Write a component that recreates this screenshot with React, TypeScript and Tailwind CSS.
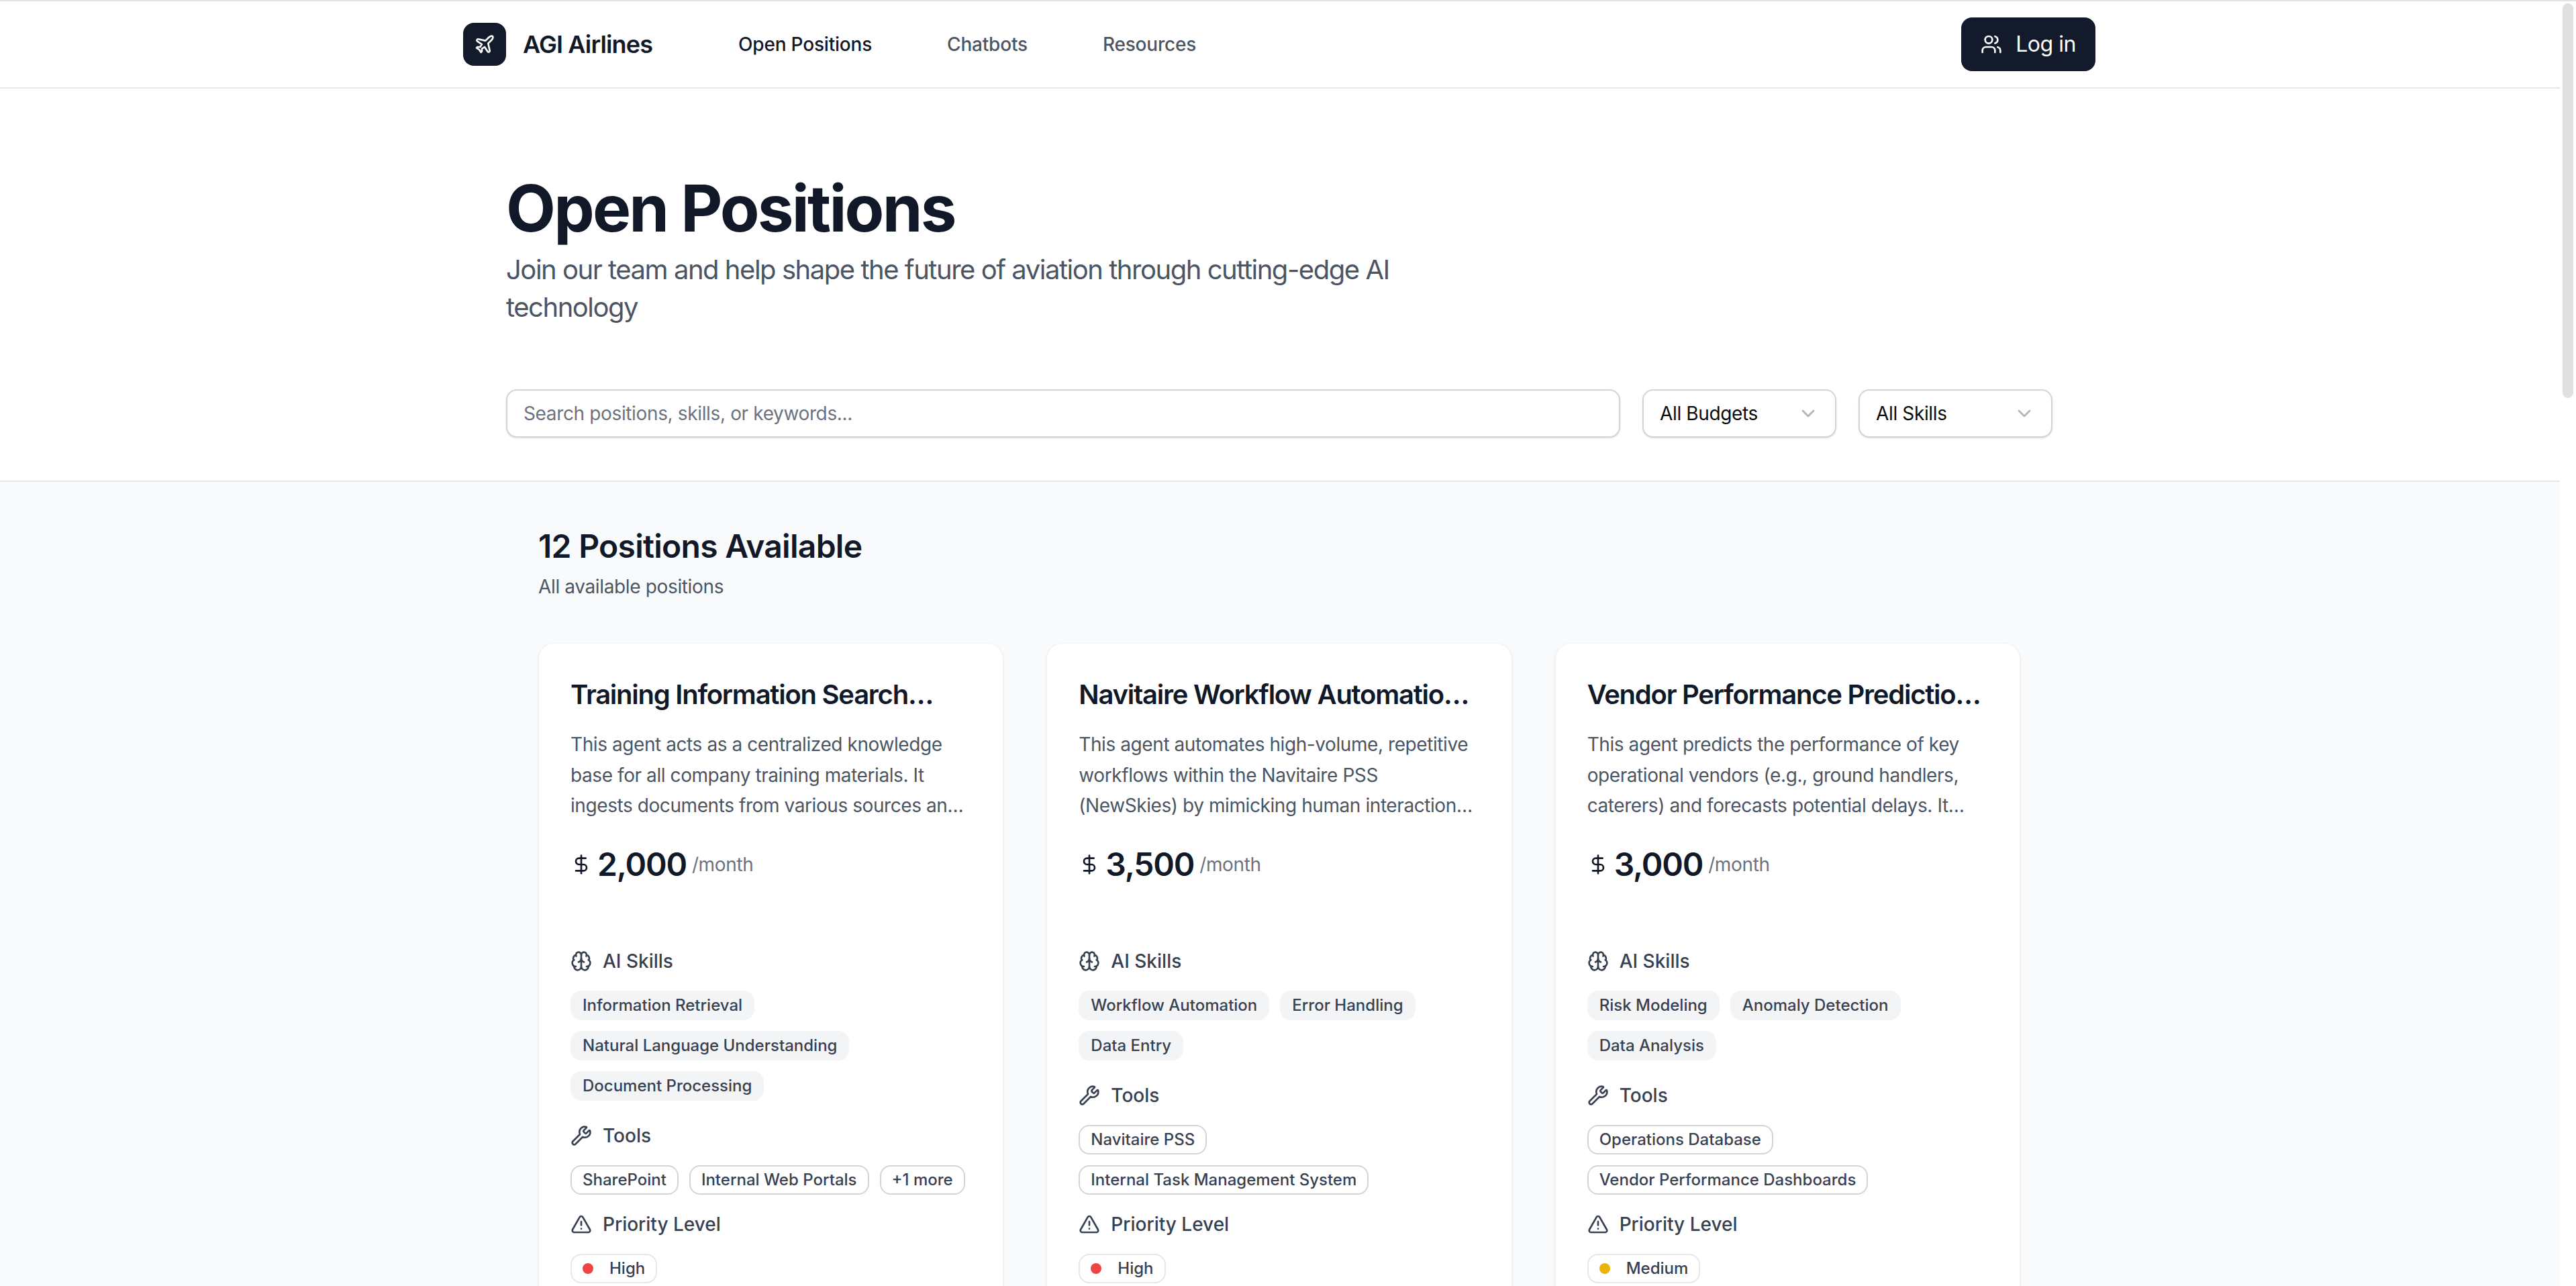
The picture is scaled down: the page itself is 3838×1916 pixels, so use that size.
import { Brain, ChevronDown, DollarSign, Plane, TriangleAlert, Users, Wrench } from 'lucide-react'

const JOBS = [
  {
    title: 'Training Information Search Agent',
    description:
      'This agent acts as a centralized knowledge base for all company training materials. It ingests documents from various sources and makes them searchable for every employee across the airline.',
    salary: '2,000',
    skills: ['Information Retrieval', 'Natural Language Understanding', 'Document Processing'],
    tools: ['SharePoint', 'Internal Web Portals', '+1 more'],
    priority: 'High',
  },
  {
    title: 'Navitaire Workflow Automation Agent',
    description:
      'This agent automates high-volume, repetitive workflows within the Navitaire PSS (NewSkies) by mimicking human interactions with the system and handling common errors along the way.',
    salary: '3,500',
    skills: ['Workflow Automation', 'Error Handling', 'Data Entry'],
    tools: ['Navitaire PSS', 'Internal Task Management System'],
    priority: 'High',
  },
  {
    title: 'Vendor Performance Prediction Agent',
    description:
      'This agent predicts the performance of key operational vendors (e.g., ground handlers, caterers) and forecasts potential delays. It helps operations teams plan ahead and reduce disruption.',
    salary: '3,000',
    skills: ['Risk Modeling', 'Anomaly Detection', 'Data Analysis'],
    tools: ['Operations Database', 'Vendor Performance Dashboards'],
    priority: 'Medium',
  },
]

function Label({ icon, text }: { icon: React.ReactNode; text: string }) {
  return (
    <div className="flex items-center gap-4 text-[28px] leading-[40px] font-medium text-[#374151] mb-6">
      {icon}
      {text}
    </div>
  )
}

function JobCard({ job }: { job: (typeof JOBS)[number] }) {
  return (
    <div className="bg-white rounded-3xl border border-[#f3f4f6] shadow-sm py-12 pl-[47px] pr-12 h-[1100px]">
      <h3 className="text-[40px] leading-[56px] font-semibold tracking-[-1.25px] text-[#111827] line-clamp-1">{job.title}</h3>
      <p className="mt-6 text-[28px] leading-[45.5px] tracking-[-0.42px] text-[#4b5563] line-clamp-3">{job.description}</p>
      <div className="mt-8 flex items-center h-16">
        <DollarSign className="w-8 h-8 text-[#111827] mr-2" strokeWidth={2} />
        <span className="text-[48px] leading-[64px] font-semibold tracking-[-1.2px] text-[#111827]">{job.salary}</span>
        <span className="ml-2 text-[28px] leading-[40px] tracking-[-0.36px] text-[#6b7280]">/month</span>
      </div>

      <div className="mt-[92px] mb-8">
        <Label icon={<Brain className="w-8 h-8" strokeWidth={2} />} text="AI Skills" />
        <div className="flex flex-wrap gap-4">
          {job.skills.map(s => (
            <span key={s} className="rounded-2xl border-2 border-transparent bg-[#f3f4f6] px-4 py-1 text-[24px] leading-[32px] font-medium text-[#374151]">{s}</span>
          ))}
        </div>
      </div>

      <div className="mb-6">
        <Label icon={<Wrench className="w-8 h-8" strokeWidth={2} />} text="Tools" />
        <div className="flex flex-wrap gap-4">
          {job.tools.map(t => (
            <span key={t} className="rounded-2xl border-2 border-[#d1d5db] px-4 py-1 text-[24px] leading-[32px] font-medium text-[#374151]">{t}</span>
          ))}
        </div>
      </div>

      <Label icon={<TriangleAlert className="w-8 h-8" strokeWidth={2} />} text="Priority Level" />
      <span className="inline-flex items-center gap-6 rounded-2xl border-2 border-[#e5e7eb] px-4 py-1 text-[24px] leading-[32px] font-medium text-[#374151]">
        <span className={`w-4 h-4 rounded-full ${job.priority === 'High' ? 'bg-[#ef4444]' : 'bg-[#eab308]'}`} />
        {job.priority}
      </span>
    </div>
  )
}

function FilterSelect({ label }: { label: string }) {
  return (
    <div className="w-[289px] h-[72px] flex items-center justify-between rounded-2xl border-2 border-[#d1d5db] bg-white shadow-sm px-6 text-[28px] tracking-[-0.36px] text-[#0a0a0a]">
      {label}
      <ChevronDown className="w-8 h-8 text-[#b4b4b4]" strokeWidth={2} />
    </div>
  )
}

export default function App() {
  return (
    <div className="flex flex-col h-screen overflow-hidden bg-white font-['Inter',sans-serif]">
      <div className="h-[2px] shrink-0 bg-[#e2e2e2]" />
      <div className="flex flex-1 min-h-0">
        <div className="w-[3814px] shrink-0">
          <header className="h-[130px] border-b-2 border-[#e5e7eb] bg-white pr-[2px]">
            <div className="max-w-[2560px] mx-auto px-16 h-full flex items-center justify-between">
              <div className="flex items-center">
                <div className="w-16 h-16 rounded-2xl bg-[#131a2b] flex items-center justify-center">
                  <Plane className="w-8 h-8 text-white" strokeWidth={2} />
                </div>
                <span className="ml-[25px] text-[36px] leading-[56px] font-semibold tracking-[-0.85px] text-[#111827]">AGI Airlines</span>
                <nav className="ml-[128px] flex items-center gap-[112px] text-[28px] leading-[40px] font-medium tracking-[-0.2px]">
                  <a className="text-[#111827]">Open Positions</a>
                  <a className="text-[#4b5563]">Chatbots</a>
                  <a className="text-[#4b5563]">Resources</a>
                </nav>
              </div>
              <button className="w-[200px] h-20 rounded-2xl bg-[#131a2b] text-white flex items-center justify-center gap-5 text-[32px] font-normal tracking-[-0.5px]">
                <Users className="w-8 h-8" strokeWidth={2} />
                Log in
              </button>
            </div>
          </header>

          <section className="border-b-2 border-[#e5e7eb] bg-white pr-[2px]">
            <div className="max-w-[2304px] mx-auto pt-[130px] pb-16">
              <h1 className="text-[96px] leading-[96px] font-bold tracking-[-2.8px] text-[#111827]">Open Positions</h1>
              <p className="mt-4 max-w-[1344px] text-[40px] leading-[56px] tracking-[-1.47px] text-[#4b5563]">
                Join our team and help shape the future of aviation through cutting-edge AI technology
              </p>
              <div className="mt-[94px] flex gap-[33px]">
                <div className="flex-1 h-[72px] flex items-center rounded-2xl border-2 border-[#d1d5db] bg-white shadow-sm px-6 text-[28px] tracking-[-0.36px] text-[#6b7280]">
                  Search positions, skills, or keywords...
                </div>
                <FilterSelect label="All Budgets" />
                <FilterSelect label="All Skills" />
              </div>
            </div>
          </section>

          <section className="bg-[#f9fafb] h-[1300px] pr-[2px]">
            <div className="max-w-[2304px] mx-auto px-12 pt-16">
              <h2 className="text-[48px] leading-[64px] font-semibold tracking-[-0.72px] text-[#111827]">12 Positions Available</h2>
              <p className="mt-2 text-[28px] leading-[40px] tracking-[-0.36px] text-[#4b5563]">All available positions</p>
              <div className="mt-16 grid grid-cols-3 gap-16">
                {JOBS.map(job => <JobCard key={job.title} job={job} />)}
              </div>
            </div>
          </section>
        </div>
        <div className="flex-1 bg-white pt-[3px] pl-1">
          <div className="w-4 h-[588px] rounded-full bg-[#e0e0e0]" />
        </div>
      </div>
    </div>
  )
}
